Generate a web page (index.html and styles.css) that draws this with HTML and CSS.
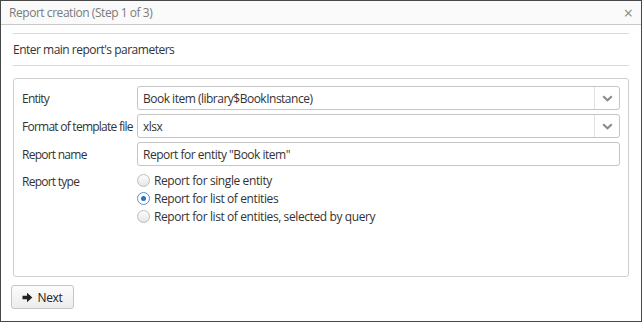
FILE: index.html
```html
<!DOCTYPE html>
<html>
<head>
<meta charset="utf-8">
<link rel="stylesheet" href="styles.css">
</head>
<body>
<div class="window">
  <div class="header">
    <span class="title">Report creation (Step 1 of 3)</span>
    <span class="close">×</span>
  </div>
  <div class="content">
    <div class="intro">Enter main report's parameters</div>
    <div class="group">
      <div class="row">
        <div class="label">Entity</div>
        <div class="field select">
          <span class="value">Book item (library$BookInstance)</span>
          <span class="arrow"><svg width="11" height="7" viewBox="0 0 11 7"><path d="M1.2 1.2 L5.5 5.3 L9.8 1.2" fill="none" stroke="#8a8a8a" stroke-width="2"/></svg></span>
        </div>
      </div>
      <div class="row">
        <div class="label">Format of template file</div>
        <div class="field select">
          <span class="value">xlsx</span>
          <span class="arrow"><svg width="11" height="7" viewBox="0 0 11 7"><path d="M1.2 1.2 L5.5 5.3 L9.8 1.2" fill="none" stroke="#8a8a8a" stroke-width="2"/></svg></span>
        </div>
      </div>
      <div class="row">
        <div class="label">Report name</div>
        <div class="field">
          <span class="value">Report for entity "Book item"</span>
        </div>
      </div>
      <div class="row radios-row">
        <div class="label">Report type</div>
        <div class="radios">
          <div class="radio"><span class="circle"></span>Report for single entity</div>
          <div class="radio"><span class="circle checked"></span>Report for list of entities</div>
          <div class="radio"><span class="circle"></span>Report for list of entities, selected by query</div>
        </div>
      </div>
    </div>
    <div class="buttons">
      <button class="btn"><svg width="11" height="11" viewBox="0 0 11 11"><path d="M0.5 3.8 H5 V0.8 L10.3 5.5 L5 10.2 V7.2 H0.5 Z" fill="#222"/></svg>Next</button>
    </div>
  </div>
</div>
</body>
</html>
```
FILE: styles.css
```css
html, body {
  margin: 0;
  padding: 0;
}
body {
  width: 642px;
  height: 322px;
  font-family: "Open Sans", "Liberation Sans", sans-serif;
  font-size: 12px;
  letter-spacing: -0.5px;
  color: #333;
  background: #fff;
}
.window {
  box-sizing: border-box;
  width: 642px;
  height: 322px;
  border: 1px solid #474747;
  background: #fff;
}
.header {
  height: 23px;
  border-bottom: 1px solid #c9c9c9;
  background: #fafafa;
  display: flex;
  align-items: center;
  justify-content: space-between;
  padding: 0 8px 0 8px;
}
.title {
  color: #7a7a7a;
  letter-spacing: -0.45px;
}
.close {
  font-size: 16px;
  color: #888;
  line-height: 16px;
  letter-spacing: 0;
}
.content {
  padding: 8px 12px 0 12px;
}
.intro {
  border-top: 1px solid #d9d9d9;
  border-bottom: 1px solid #d9d9d9;
  height: 31px;
  display: flex;
  align-items: center;
}
.group {
  margin-top: 12px;
  box-sizing: border-box;
  height: 199px;
  border: 1px solid #cfcfcf;
  border-radius: 3px;
  padding: 7px 8px 0 8px;
  display: flex;
  flex-direction: column;
  gap: 4px;
}
.row {
  display: flex;
  align-items: center;
}
.label {
  width: 115px;
  flex: none;
  white-space: nowrap;
  letter-spacing: -0.75px;
}
.field {
  flex: 1;
  box-sizing: border-box;
  height: 24px;
  border: 1px solid #c5c5c5;
  border-radius: 3px;
  display: flex;
  align-items: center;
  padding-left: 5px;
}
.field .value {
  flex: 1;
}
.arrow {
  width: 24px;
  height: 100%;
  border-left: 1px solid #e3e3e3;
  display: flex;
  align-items: center;
  justify-content: center;
}
.radios-row {
  align-items: flex-start;
  margin-top: 1px;
}
.radios-row .label {
  padding-top: 2px;
}
.radios {
  display: flex;
  flex-direction: column;
}
.radio {
  height: 18px;
  display: flex;
  align-items: center;
  letter-spacing: -0.4px;
}
.circle {
  box-sizing: border-box;
  width: 13px;
  height: 13px;
  border-radius: 50%;
  border: 1px solid #bdbdbd;
  background: linear-gradient(#fdfdfd, #e6e6e6);
  margin-left: 0;
  margin-right: 4px;
  position: relative;
}
.circle.checked {
  border-color: #5a8fd0;
  background: #fff;
}
.circle.checked::after {
  content: "";
  position: absolute;
  left: 3px;
  top: 3px;
  width: 5px;
  height: 5px;
  border-radius: 50%;
  background: #2f6fc0;
}
.buttons {
  margin-top: 8px;
  margin-left: -2px;
}
.btn {
  box-sizing: border-box;
  height: 24px;
  width: 63px;
  border: 1px solid #c5c5c5;
  border-radius: 3px;
  background: linear-gradient(#fcfcfc, #ececec);
  font-family: inherit;
  font-size: 12px;
  letter-spacing: -0.3px;
  color: #222;
  display: flex;
  align-items: center;
  justify-content: center;
  gap: 4px;
  padding: 0;
}
```
